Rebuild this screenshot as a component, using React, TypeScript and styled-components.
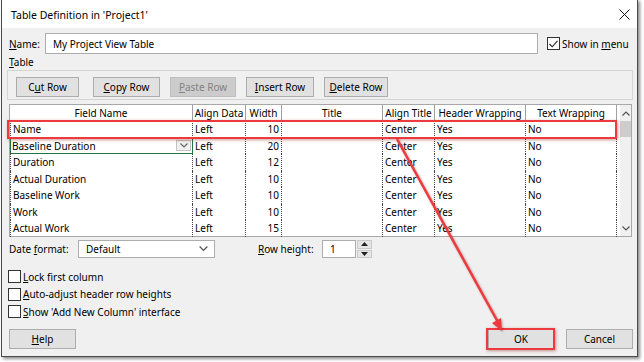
import React from "react"
import styled, { createGlobalStyle } from "styled-components"

const GlobalStyle = createGlobalStyle`
  html, body {
    margin: 0;
    padding: 0;
    background: #ffffff;
  }
  body {
    width: 644px;
    height: 362px;
    overflow: hidden;
    font-family: "Noto Sans", sans-serif;
    font-size: 10px;
    color: #000;
  }
  * { box-sizing: border-box; }
`

const Dialog = styled.div`
  position: relative;
  margin: -1px 0 0 1px;
  width: 637px;
  height: 358px;
  border: 1px solid #4a4a4a;
  box-shadow: 2px 2px 3px rgba(0, 0, 0, 0.45);
  background: #f0f0f0;
  display: flex;
  flex-direction: column;
`

const TitleBar = styled.div`
  height: 28px;
  background: #ffffff;
  display: flex;
  align-items: center;
  justify-content: space-between;
  padding: 1px 7px 0 9px;
  font-size: 10.5px;
`

const Body = styled.div`
  display: flex;
  flex-direction: column;
  padding: 0 4px 0 6px;
`

const Row = styled.div<{ $top?: number; $h?: number }>`
  display: flex;
  align-items: center;
  margin-top: ${(p) => p.$top ?? 0}px;
  height: ${(p) => p.$h ?? 18}px;
`

const Label = styled.span<{ $w?: number; $left?: number }>`
  display: inline-block;
  width: ${(p) => (p.$w ? `${p.$w}px` : "auto")};
  margin-left: ${(p) => p.$left ?? 0}px;
  padding-left: 1px;
  flex-shrink: 0;
  white-space: nowrap;
`

const CheckLabel = styled.label`
  display: flex;
  align-items: center;
  margin-left: 9px;
  white-space: nowrap;
`

const TextBox = styled.div<{ $w: number }>`
  width: ${(p) => p.$w}px;
  height: 100%;
  background: #fff;
  border: 1px solid #adadad;
  display: flex;
  align-items: center;
  padding-left: 7px;
  position: relative;
`

const ComboBox = styled(TextBox)`
  justify-content: space-between;
  padding-right: 6px;
`

const CheckBox = styled.span`
  display: inline-flex;
  align-items: center;
  justify-content: center;
  width: 13px;
  height: 13px;
  border: 1px solid #333;
  background: #fff;
  margin-right: 2px;
  flex-shrink: 0;
`

const GroupBox = styled.div`
  margin-left: -1px;
  height: 30px;
  border: 1px solid #d5d5d5;
  display: flex;
  gap: 10px;
  padding: 6px 0 0 8px;
`

const Button = styled.div<{ $w: number; $disabled?: boolean; $extra?: number; $left?: number }>`
  width: ${(p) => p.$w}px;
  height: 20px;
  margin-right: ${(p) => p.$extra ?? 0}px;
  margin-left: ${(p) => p.$left ?? 0}px;
  background: ${(p) => (p.$disabled ? "#cccccc" : "#e1e1e1")};
  border: 1px solid ${(p) => (p.$disabled ? "#bfbfbf" : "#adadad")};
  color: ${(p) => (p.$disabled ? "#838383" : "#000")};
  display: flex;
  align-items: center;
  justify-content: center;
  white-space: nowrap;
  flex-shrink: 0;
`

const GridWrap = styled.div`
  margin: 4px 0 0 1px;
  width: 623px;
  height: 133px;
  border: 1px solid #a8a8a8;
  background: #fff;
  display: flex;
`

const Grid = styled.div`
  display: grid;
  grid-template-columns: 183px 53px 36px 101px 52px 91px 91px;
  grid-auto-rows: 16.5px;
  grid-template-rows: 16px;
  align-content: start;
`

const HeadCell = styled.div`
  border-right: 1px solid #a0a0a0;
  display: flex;
  align-items: center;
  justify-content: center;
  white-space: nowrap;
  overflow: hidden;
`

const Cell = styled.div<{ $right?: boolean; $first?: boolean }>`
  border-right: 1px dotted #444;
  border-left: ${(p) => (p.$first ? "1px dotted #444" : "none")};
  display: flex;
  align-items: center;
  justify-content: ${(p) => (p.$right ? "flex-end" : "flex-start")};
  padding: ${(p) => (p.$right ? "0 2px 0 0" : "0 0 0 2px")};
  white-space: nowrap;
  position: relative;
`

const EditCell = styled(Cell)`
  border: 1px solid #217346;
  padding-left: 1px;
  justify-content: space-between;
`

const CellDrop = styled.span`
  width: 15px;
  height: 11px;
  margin-right: 1px;
  background: #f0f0f0;
  border: 1px solid #c4c4c4;
  display: flex;
  align-items: center;
  justify-content: center;
`

const ScrollBar = styled.div`
  margin-left: 3px;
  width: 15px;
  height: 100%;
  background: #f0f0f0;
  display: flex;
  flex-direction: column;
  align-items: center;
`

const ScrollArrow = styled.div`
  height: 16px;
  width: 100%;
  display: flex;
  align-items: center;
  justify-content: center;
`

const Thumb = styled.div`
  width: 100%;
  height: 16px;
  background: #cdcdcd;
`

const Spin = styled.div`
  width: 15px;
  height: 18px;
  margin-left: 1px;
  display: flex;
  flex-direction: column;
  gap: 1px;
`

const SpinBtn = styled.div`
  flex: 1;
  background: #e5e5e5;
  border: 1px solid #c9c9c9;
  display: flex;
  align-items: center;
  justify-content: center;
`

const Footer = styled.div`
  display: flex;
  align-items: center;
  margin-top: 8px;
  padding-left: 1px;
`

const Spacer = styled.div`
  flex: 1;
`

const RedBox = styled.div<{ $x: number; $y: number; $w: number; $h: number }>`
  position: absolute;
  left: ${(p) => p.$x}px;
  top: ${(p) => p.$y}px;
  width: ${(p) => p.$w}px;
  height: ${(p) => p.$h}px;
  border: 2px solid #ec3a3f;
  box-shadow: 1px 1px 3px rgba(150, 30, 30, 0.45);
  pointer-events: none;
`

const ArrowLayer = styled.svg`
  position: absolute;
  left: 0;
  top: 0;
  pointer-events: none;
  filter: drop-shadow(1px 1px 1px rgba(120, 20, 20, 0.4));
`

const Chevron = ({ up = false, size = 8, color = "#444" }: { up?: boolean; size?: number; color?: string }) => (
  <svg width={size} height={size / 2 + 1} viewBox="0 0 8 5">
    <polyline
      points={up ? "0.5,4.5 4,1 7.5,4.5" : "0.5,0.5 4,4 7.5,0.5"}
      fill="none"
      stroke={color}
      strokeWidth="1.2"
    />
  </svg>
)

const Tri = ({ up = false }: { up?: boolean }) => (
  <svg width="7" height="4" viewBox="0 0 7 4">
    <polygon points={up ? "0,4 3.5,0 7,4" : "0,0 3.5,4 7,0"} fill="#222" />
  </svg>
)

const rows = [
  ["Name", "Left", "10", "", "Center", "Yes", "No"],
  ["Baseline Duration", "Left", "20", "", "Center", "Yes", "No"],
  ["Duration", "Left", "12", "", "Center", "Yes", "No"],
  ["Actual Duration", "Left", "10", "", "Center", "Yes", "No"],
  ["Baseline Work", "Left", "10", "", "Center", "Yes", "No"],
  ["Work", "Left", "10", "", "Center", "Yes", "No"],
  ["Actual Work", "Left", "15", "", "Center", "Yes", "No"],
]

const headers = ["Field Name", "Align Data", "Width", "Title", "Align Title", "Header Wrapping", "Text Wrapping"]

export default function App() {
  return (
    <>
      <GlobalStyle />
      <Dialog>
        <TitleBar>
          <span>Table Definition in 'Project1'</span>
          <svg width="11" height="11" viewBox="0 0 11 11">
            <path d="M0.5 0.5 L10.5 10.5 M10.5 0.5 L0.5 10.5" stroke="#111" strokeWidth="1" />
          </svg>
        </TitleBar>
        <Body>
          <Row $top={5} $h={21}>
            <Label $w={37}>
              <u>N</u>ame:
            </Label>
            <TextBox $w={493}>My Project View Table</TextBox>
            <CheckLabel>
              <CheckBox>
                <svg width="9" height="8" viewBox="0 0 9 8">
                  <polyline points="0.5,4 3.2,6.8 8.5,0.8" fill="none" stroke="#222" strokeWidth="1.1" />
                </svg>
              </CheckBox>
              <span>
                Show in <u>m</u>enu
              </span>
            </CheckLabel>
          </Row>
          <Row $h={16}>
            <Label>
              <u>T</u>able
            </Label>
          </Row>
          <GroupBox>
            <Button $w={63} $extra={4}>
              <span>
                C<u>u</u>t Row
              </span>
            </Button>
            <Button $w={67}>
              <span>
                <u>C</u>opy Row
              </span>
            </Button>
            <Button $w={66} $disabled>
              <span>
                <u>P</u>aste Row
              </span>
            </Button>
            <Button $w={68}>
              <span>
                <u>I</u>nsert Row
              </span>
            </Button>
            <Button $w={64}>
              <span>
                <u>D</u>elete Row
              </span>
            </Button>
          </GroupBox>
          <GridWrap>
            <Grid>
              {headers.map((h) => (
                <HeadCell key={h}>{h}</HeadCell>
              ))}
              {rows.map((r, i) =>
                r.map((v, j) => {
                  if (i === 1 && j === 0)
                    return (
                      <EditCell key={`${i}-${j}`}>
                        {v}
                        <CellDrop>
                          <Chevron size={8} color="#666" />
                        </CellDrop>
                      </EditCell>
                    )
                  return (
                    <Cell key={`${i}-${j}`} $right={j === 2} $first={j === 0}>
                      {v}
                    </Cell>
                  )
                })
              )}
            </Grid>
            <ScrollBar>
              <ScrollArrow>
                <Chevron up size={8} color="#555" />
              </ScrollArrow>
              <Thumb />
              <Spacer />
              <ScrollArrow>
                <Chevron size={8} color="#555" />
              </ScrollArrow>
            </ScrollBar>
          </GridWrap>
          <Row $top={3} $h={18}>
            <Label $w={70}>
              Date <u>f</u>ormat:
            </Label>
            <ComboBox $w={137}>
              <span>Default</span>
              <Chevron size={9} color="#555" />
            </ComboBox>
            <Label $w={65} $left={42}>
              <u>R</u>ow height:
            </Label>
            <TextBox $w={34}>1</TextBox>
            <Spin>
              <SpinBtn>
                <Tri up />
              </SpinBtn>
              <SpinBtn>
                <Tri />
              </SpinBtn>
            </Spin>
          </Row>
          <Row $top={10} $h={17.5}>
            <CheckBox />
            <span>
              <u>L</u>ock first column
            </span>
          </Row>
          <Row $h={17.5}>
            <CheckBox />
            <span>
              <u>A</u>uto-adjust header row heights
            </span>
          </Row>
          <Row $h={17.5}>
            <CheckBox />
            <span>
              <u>S</u>how 'Add New Column' interface
            </span>
          </Row>
          <Footer>
            <Button $w={67}>
              <span>
                <u>H</u>elp
              </span>
            </Button>
            <Spacer />
            <Button $w={66}>OK</Button>
            <Button $w={67} $left={12}>
              Cancel
            </Button>
          </Footer>
        </Body>
        <RedBox $x={5} $y={120} $w={610} $h={19} />
        <RedBox $x={484} $y={328} $w={69} $h={22} />
        <ArrowLayer width="635" height="356" viewBox="0 0 635 356">
          <line x1="395" y1="139" x2="497" y2="324" stroke="#ec3a3f" strokeWidth="2.5" />
          <polygon points="500,331 499,318 490,323" fill="#ec3a3f" />
        </ArrowLayer>
      </Dialog>
    </>
  )
}
